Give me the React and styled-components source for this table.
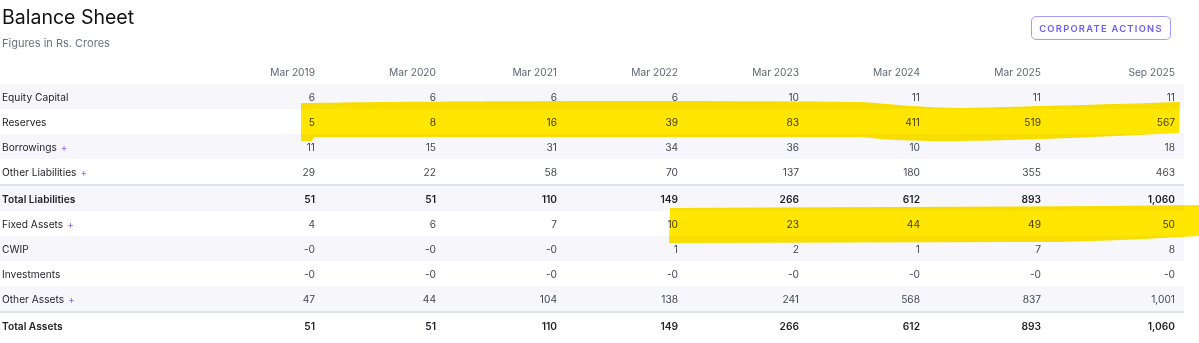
import styled, { createGlobalStyle } from 'styled-components';

const Global = createGlobalStyle`
  body {
    margin: 0;
    background: #fff;
    font-family: Inter, "Noto Sans", sans-serif;
    color: #222;
  }
`;

const Page = styled.div`
  position: relative;
  width: 1199px;
  height: 343px;
  overflow: hidden;
`;

const Top = styled.div`
  display: flex;
  justify-content: space-between;
  align-items: flex-start;
  padding: 4px 28px 0 2px;
`;

const Title = styled.h2`
  margin: 0;
  font-size: 19.5px;
  font-weight: 400;
  line-height: 26px;
  color: #111;
`;

const Sub = styled.p`
  margin: 5px 0 0;
  font-size: 11px;
  line-height: 16px;
  color: #6a7280;
`;

const ActionButton = styled.button`
  margin-top: 12px;
  height: 24px;
  width: 140px;
  border: 1px solid #a59dff;
  border-radius: 5px;
  background: #fff;
  color: #6a5cf6;
  font-family: Inter, sans-serif;
  font-weight: 600;
  font-size: 9.3px;
  letter-spacing: 1.3px;
`;

const Table = styled.table`
  margin-top: 8px;
  border-collapse: collapse;
  width: 1184px;
  table-layout: fixed;
  font-size: 10.2px;
`;

const Th = styled.th`
  font-weight: 400;
  color: #5f6876;
  text-align: right;
  padding: 0 9px 0 0;
  height: 25px;
`;

const Row = styled.tr`
  background: ${p => (p.$stripe ? '#f7f7fb' : '#fff')};
  border-top: ${p => (p.$total ? '2px solid #dde2ee' : 'none')};
  font-weight: ${p => (p.$total ? 600 : 400)};
`;

const Label = styled.td`
  padding: 0 0 0 2px;
  height: 25px;
  color: #24242c;
  text-align: left;
`;

const Val = styled.td`
  text-align: right;
  padding: 0 9px 0 0;
  color: ${p => (p.$bold ? '#1f1f26' : '#43474f')};
`;

const Plus = styled.span`
  color: #7a6cf7;
  font-size: 10px;
  margin-left: 4px;
`;

const Marker = styled.svg`
  position: absolute;
  left: 0;
  top: 0;
  pointer-events: none;
  mix-blend-mode: multiply;
`;

const years = ['Mar 2019', 'Mar 2020', 'Mar 2021', 'Mar 2022', 'Mar 2023', 'Mar 2024', 'Mar 2025', 'Sep 2025'];
const widths = [203, 121, 121, 121, 121, 121, 121, 121, 134];

const rows = [
  { name: 'Equity Capital', v: ['6', '6', '6', '6', '10', '11', '11', '11'] },
  { name: 'Reserves', v: ['5', '8', '16', '39', '83', '411', '519', '567'] },
  { name: 'Borrowings', plus: true, v: ['11', '15', '31', '34', '36', '10', '8', '18'] },
  { name: 'Other Liabilities', plus: true, v: ['29', '22', '58', '70', '137', '180', '355', '463'] },
  { name: 'Total Liabilities', total: true, v: ['51', '51', '110', '149', '266', '612', '893', '1,060'] },
  { name: 'Fixed Assets', plus: true, v: ['4', '6', '7', '10', '23', '44', '49', '50'] },
  { name: 'CWIP', v: ['-0', '-0', '-0', '1', '2', '1', '7', '8'] },
  { name: 'Investments', v: ['-0', '-0', '-0', '-0', '-0', '-0', '-0', '-0'] },
  { name: 'Other Assets', plus: true, v: ['47', '44', '104', '138', '241', '568', '837', '1,001'] },
  { name: 'Total Assets', total: true, v: ['51', '51', '110', '149', '266', '612', '893', '1,060'] },
];

export default function App() {
  return (
    <Page>
      <Global />
      <Top>
        <div>
          <Title>Balance Sheet</Title>
          <Sub>Figures in Rs. Crores</Sub>
        </div>
        <ActionButton>CORPORATE ACTIONS</ActionButton>
      </Top>
      <Table>
        <colgroup>
          {widths.map((w, i) => <col key={i} style={{ width: w }} />)}
        </colgroup>
        <thead>
          <tr>
            <Th />
            {years.map(y => <Th key={y}>{y}</Th>)}
          </tr>
        </thead>
        <tbody>
          {rows.map((r, i) => (
            <Row key={r.name} $stripe={i % 2 === 0} $total={r.total}>
              <Label>
                {r.name}
                {r.plus && <Plus>+</Plus>}
              </Label>
              {r.v.map((v, j) => <Val key={j} $bold={r.total}>{v}</Val>)}
            </Row>
          ))}
        </tbody>
      </Table>
      {/* marker strokes drawn over the table */}
      <Marker width="1199" height="343" viewBox="0 0 1199 343">
        <path
          fill="#ffe600"
          d="M301,103 C420,101 700,100 860,102 C885,103 905,107 960,108 C1050,106 1120,104 1180,102 L1179,133 C1100,137 1010,141 945,141 C900,141 880,139 860,137 L314,137 L312,141 L301,141 Z"
        />
        <path
          fill="#ffe600"
          d="M670,208 L900,207 C1000,207 1100,206 1199,205 L1199,236 C1150,239 1100,241 1060,242 L669,243 Z"
        />
      </Marker>
    </Page>
  );
}
